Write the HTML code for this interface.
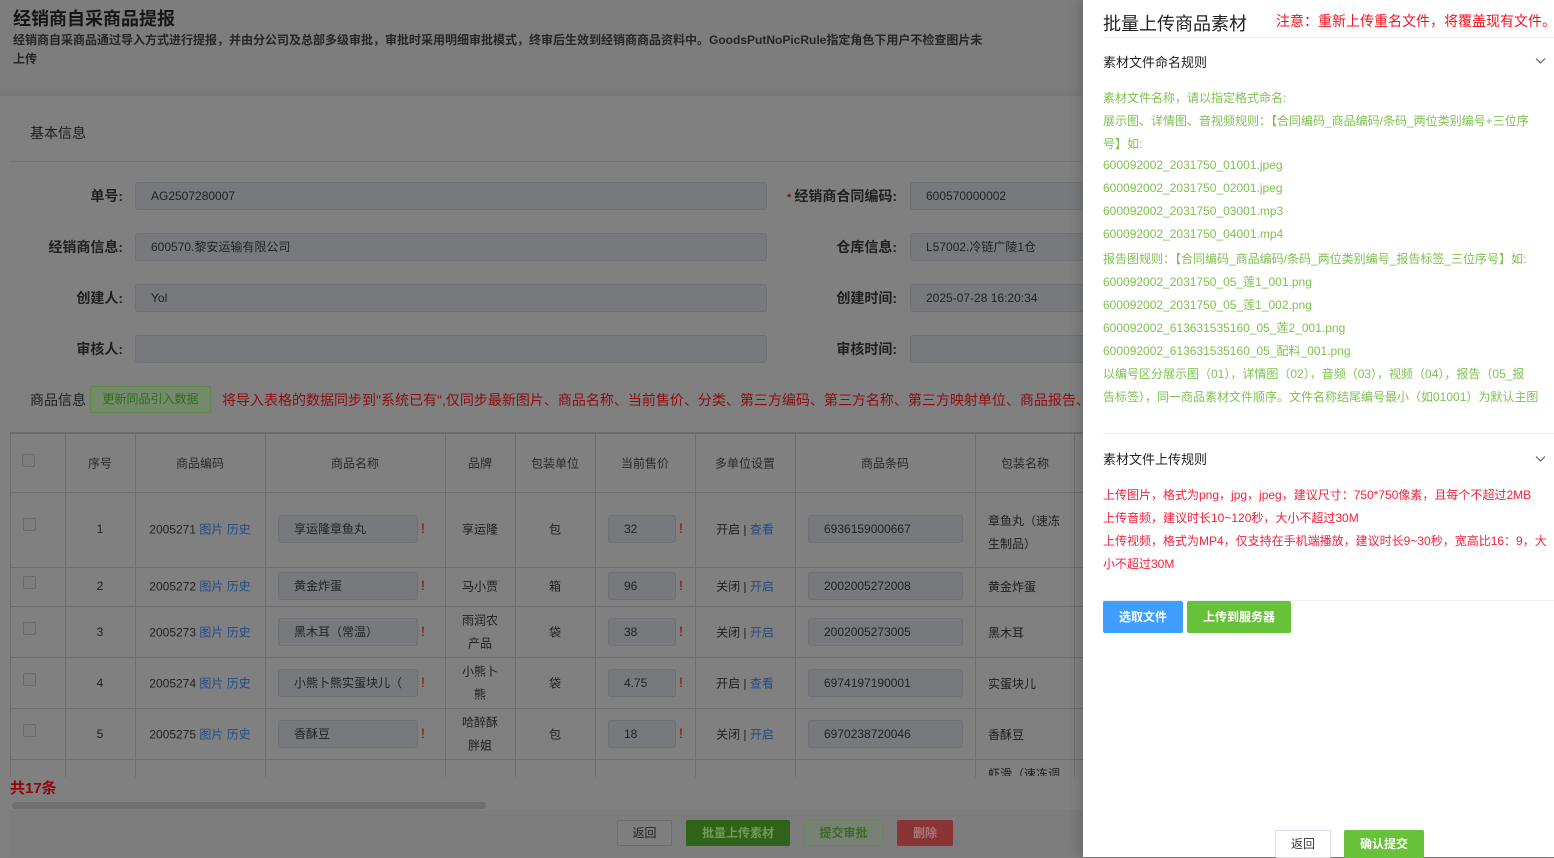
<!DOCTYPE html>
<html><head><meta charset="utf-8">
<style>
*{margin:0;padding:0;box-sizing:border-box}
body{width:1554px;height:857px;overflow:hidden;background:#808080;font-family:"Liberation Sans","Noto Sans CJK SC",sans-serif;position:relative;color:#1c1c1c}
.a{position:absolute;white-space:nowrap}
.hdr{left:0;top:0;width:1083px;height:94px;background:#7d7d7d}
.band{left:0;top:88px;width:1083px;height:8px;background:linear-gradient(#7b7b7b,#787878)}
.lab{font-size:14px;font-weight:bold;color:#202020;text-align:right}
.inp{height:28px;background:#77797c;border:1px solid #6f7174;border-radius:3px;font-size:12px;color:#222;padding-left:15px;line-height:26px}
.tbl{left:10px;top:432px;width:1073px;height:345px;border-top:2px solid #6c6c6c;overflow:hidden}
.vl{position:absolute;top:0;width:1px;height:345px;background:#6e6e6e}
.hl{position:absolute;left:0;width:1073px;height:1px;background:#6e6e6e}
.c{position:absolute;font-size:12px;color:#1f1f1f;transform:translate(-50%,-50%);white-space:nowrap}
.th{color:#2a2a2a}
.lk{color:#1f4b8a}
.ti{position:absolute;height:28px;background:#77797c;border:1px solid #6f7174;border-radius:3px;font-size:12px;color:#222;padding-left:15px;line-height:26px;white-space:nowrap;overflow:hidden}
.ex{position:absolute;color:#8a0a0a;font-size:14px}
.cb{position:absolute;left:12px;width:13px;height:13px;border:1px solid #6a6a6a;border-radius:2px;background:#7e7e7e}
.drawer{left:1083px;top:0;width:471px;height:857px;background:#fff;box-shadow:-4px 0 10px rgba(0,0,0,.15)}
.g{font-size:12px;color:#7ec24f;position:absolute;left:20px;white-space:nowrap}
.r{font-size:12px;color:#f5223d;position:absolute;left:20px;white-space:nowrap}
.btn{position:absolute;font-size:12px;font-weight:bold;text-align:center;border-radius:2px}
</style></head><body>
<div class="a hdr"></div>
<div class="a band"></div>
<div class="a" style="left:13px;top:5px;font-size:18px;font-weight:bold;color:#161616">经销商自采商品提报</div>
<div class="a" style="left:13px;top:31px;font-size:12px;font-weight:bold;color:#262626">经销商自采商品通过导入方式进行提报，并由分公司及总部多级审批，审批时采用明细审批模式，终审后生效到经销商商品资料中。GoodsPutNoPicRule指定角色下用户不检查图片未</div>
<div class="a" style="left:13px;top:50px;font-size:12px;font-weight:bold;color:#262626">上传</div>

<div class="a" style="left:30px;top:123px;font-size:14px;color:#1e1e1e">基本信息</div>
<div class="a" style="left:10px;top:161px;width:1073px;height:1px;background:#747474"></div>

<div class="a lab" style="left:20px;width:103px;top:186px">单号:</div>
<div class="a inp" style="left:135px;top:182px;width:632px">AG2507280007</div>
<div class="a lab" style="left:780px;width:117px;top:186px"><span style="color:#8a0a0a;font-size:11px">* </span>经销商合同编码:</div>
<div class="a inp" style="left:910px;top:182px;width:180px">600570000002</div>

<div class="a lab" style="left:20px;width:103px;top:237px">经销商信息:</div>
<div class="a inp" style="left:135px;top:233px;width:632px">600570.黎安运输有限公司</div>
<div class="a lab" style="left:780px;width:117px;top:237px">仓库信息:</div>
<div class="a inp" style="left:910px;top:233px;width:180px">L57002.冷链广陵1仓</div>

<div class="a lab" style="left:20px;width:103px;top:288px">创建人:</div>
<div class="a inp" style="left:135px;top:284px;width:632px">Yol</div>
<div class="a lab" style="left:780px;width:117px;top:288px">创建时间:</div>
<div class="a inp" style="left:910px;top:284px;width:180px">2025-07-28 16:20:34</div>

<div class="a lab" style="left:20px;width:103px;top:339px">审核人:</div>
<div class="a inp" style="left:135px;top:335px;width:632px"></div>
<div class="a lab" style="left:780px;width:117px;top:339px">审核时间:</div>
<div class="a inp" style="left:910px;top:335px;width:180px"></div>

<div class="a" style="left:30px;top:390px;font-size:14px;color:#1e1e1e">商品信息</div>
<div class="a" style="left:90px;top:386px;width:121px;height:27px;border:1px solid #5f8a4c;background:#748a6a;border-radius:2px;font-size:12px;color:#2f6e1a;text-align:center;line-height:25px">更新同品引入数据</div>
<div class="a" style="left:222px;top:390px;font-size:14px;color:#8e0c12">将导入表格的数据同步到"系统已有",仅同步最新图片、商品名称、当前售价、分类、第三方编码、第三方名称、第三方映射单位、商品报告、</div>

<div class="a tbl">
 <div class="vl" style="left:0"></div><div class="vl" style="left:55px"></div><div class="vl" style="left:125px"></div><div class="vl" style="left:255px"></div><div class="vl" style="left:435px"></div><div class="vl" style="left:505px"></div><div class="vl" style="left:585px"></div><div class="vl" style="left:685px"></div><div class="vl" style="left:785px"></div><div class="vl" style="left:965px"></div><div class="vl" style="left:1064px"></div>
 <div class="hl" style="top:58px"></div><div class="hl" style="top:133px"></div><div class="hl" style="top:172px"></div><div class="hl" style="top:223px"></div><div class="hl" style="top:274px"></div><div class="hl" style="top:325px"></div>
 <div class="cb" style="top:20px"></div>
 <div class="c th" style="left:90px;top:29px">序号</div><div class="c th" style="left:190px;top:29px">商品编码</div><div class="c th" style="left:345px;top:29px">商品名称</div><div class="c th" style="left:470px;top:29px">品牌</div><div class="c th" style="left:545px;top:29px">包装单位</div><div class="c th" style="left:635px;top:29px">当前售价</div><div class="c th" style="left:735px;top:29px">多单位设置</div><div class="c th" style="left:875px;top:29px">商品条码</div><div class="c th" style="left:1015px;top:29px">包装名称</div>
</div>
<div class="a" style="left:0;top:0;width:0;height:0" id="rows"></div>

<!-- rows: centers 528,585,631,682,733 -->
<div class="cb a" style="top:518px;left:23px"></div>
<div class="cb a" style="top:576px;left:23px"></div>
<div class="cb a" style="top:622px;left:23px"></div>
<div class="cb a" style="top:673px;left:23px"></div>
<div class="cb a" style="top:724px;left:23px"></div>

<div class="c" style="left:100px;top:529px">1</div>
<div class="c" style="left:100px;top:586px">2</div>
<div class="c" style="left:100px;top:632px">3</div>
<div class="c" style="left:100px;top:683px">4</div>
<div class="c" style="left:100px;top:734px">5</div>

<div class="c" style="left:200px;top:529px">2005271 <span class="lk">图片 历史</span></div>
<div class="c" style="left:200px;top:586px">2005272 <span class="lk">图片 历史</span></div>
<div class="c" style="left:200px;top:632px">2005273 <span class="lk">图片 历史</span></div>
<div class="c" style="left:200px;top:683px">2005274 <span class="lk">图片 历史</span></div>
<div class="c" style="left:200px;top:734px">2005275 <span class="lk">图片 历史</span></div>

<div class="ti" style="left:278px;top:515px;width:140px">享运隆章鱼丸</div><div class="ex" style="left:421px;top:520px">!</div>
<div class="ti" style="left:278px;top:572px;width:140px">黄金炸蛋</div><div class="ex" style="left:421px;top:577px">!</div>
<div class="ti" style="left:278px;top:618px;width:140px">黑木耳（常温）</div><div class="ex" style="left:421px;top:623px">!</div>
<div class="ti" style="left:278px;top:669px;width:140px">小熊卜熊实蛋块儿（</div><div class="ex" style="left:421px;top:674px">!</div>
<div class="ti" style="left:278px;top:720px;width:140px">香酥豆</div><div class="ex" style="left:421px;top:725px">!</div>

<div class="c" style="left:480px;top:529px">享运隆</div>
<div class="c" style="left:480px;top:586px">马小贾</div>
<div class="c" style="left:480px;top:620px">雨润农</div><div class="c" style="left:480px;top:643px">产品</div>
<div class="c" style="left:480px;top:671px">小熊卜</div><div class="c" style="left:480px;top:694px">熊</div>
<div class="c" style="left:480px;top:722px">哈醉酥</div><div class="c" style="left:480px;top:745px">胖姐</div>

<div class="c" style="left:555px;top:529px">包</div>
<div class="c" style="left:555px;top:586px">箱</div>
<div class="c" style="left:555px;top:632px">袋</div>
<div class="c" style="left:555px;top:683px">袋</div>
<div class="c" style="left:555px;top:734px">包</div>

<div class="ti" style="left:608px;top:515px;width:68px">32</div><div class="ex" style="left:679px;top:520px">!</div>
<div class="ti" style="left:608px;top:572px;width:68px">96</div><div class="ex" style="left:679px;top:577px">!</div>
<div class="ti" style="left:608px;top:618px;width:68px">38</div><div class="ex" style="left:679px;top:623px">!</div>
<div class="ti" style="left:608px;top:669px;width:68px">4.75</div><div class="ex" style="left:679px;top:674px">!</div>
<div class="ti" style="left:608px;top:720px;width:68px">18</div><div class="ex" style="left:679px;top:725px">!</div>

<div class="c" style="left:745px;top:529px">开启 | <span class="lk">查看</span></div>
<div class="c" style="left:745px;top:586px">关闭 | <span class="lk">开启</span></div>
<div class="c" style="left:745px;top:632px">关闭 | <span class="lk">开启</span></div>
<div class="c" style="left:745px;top:683px">开启 | <span class="lk">查看</span></div>
<div class="c" style="left:745px;top:734px">关闭 | <span class="lk">开启</span></div>

<div class="ti" style="left:808px;top:515px;width:155px">6936159000667</div>
<div class="ti" style="left:808px;top:572px;width:155px">2002005272008</div>
<div class="ti" style="left:808px;top:618px;width:155px">2002005273005</div>
<div class="ti" style="left:808px;top:669px;width:155px">6974197190001</div>
<div class="ti" style="left:808px;top:720px;width:155px">6970238720046</div>

<div class="a" style="left:988px;top:510px;font-size:12px;line-height:23px;color:#1f1f1f">章鱼丸（速冻<br>生制品）</div>
<div class="a" style="left:988px;top:578px;font-size:12px">黄金炸蛋</div>
<div class="a" style="left:988px;top:624px;font-size:12px">黑木耳</div>
<div class="a" style="left:988px;top:675px;font-size:12px">实蛋块儿</div>
<div class="a" style="left:988px;top:726px;font-size:12px">香酥豆</div>
<div class="a" style="left:988px;top:765px;font-size:12px;height:11px;overflow:hidden">虾滑（速冻调</div>

<div class="a" style="left:0;top:777px;width:1083px;height:80px;background:#808080"></div>
<div class="a" style="left:10px;top:777px;font-size:15px;font-weight:bold;color:#8e0808">共17条</div>
<div class="a" style="left:12px;top:802px;width:474px;height:7px;border-radius:4px;background:#6f6f70"></div>
<div class="a" style="left:10px;top:810px;width:1073px;height:47px;background:#7c7c7c"></div>
<div class="btn" style="left:617px;top:820px;width:55px;height:26px;border:1px solid #6d6d6d;background:#7e7e7e;color:#222;line-height:24px;font-weight:normal">返回</div>
<div class="btn" style="left:686px;top:820px;width:104px;height:26px;background:#2f6418;color:#6f9a5a;line-height:26px">批量上传素材</div>
<div class="btn" style="left:804px;top:820px;width:79px;height:26px;border:1px solid #6e8066;background:#788274;color:#3c6a24;line-height:24px">提交审批</div>
<div class="btn" style="left:897px;top:820px;width:56px;height:26px;background:#8a3436;color:#a97a7a;line-height:26px">删除</div>

<div class="a drawer">
 <div class="a" style="left:20px;top:10px;font-size:18px;color:#222">批量上传商品素材</div>
 <div class="a" style="left:193px;top:11px;font-size:14px;color:#f5121f">注意：重新上传重名文件，将覆盖现有文件。</div>
 <div class="a" style="left:20px;top:37px;width:451px;height:1px;background:#eceff3"></div>
 <div class="a" style="left:20px;top:52px;font-size:13px;color:#222">素材文件命名规则</div>
 <svg class="a" style="left:452px;top:57px" width="11" height="8"><path d="M1 1.5 L5.5 6 L10 1.5" fill="none" stroke="#555" stroke-width="1"/></svg>
 <div class="g" style="top:89px">素材文件名称，请以指定格式命名:</div>
 <div class="g" style="top:112px">展示图、详情图、音视频规则：【合同编码_商品编码/条码_两位类别编号+三位序</div>
 <div class="g" style="top:135px">号】如:</div>
 <div class="g" style="top:158px">600092002_2031750_01001.jpeg</div>
 <div class="g" style="top:181px">600092002_2031750_02001.jpeg</div>
 <div class="g" style="top:204px">600092002_2031750_03001.mp3</div>
 <div class="g" style="top:227px">600092002_2031750_04001.mp4</div>
 <div class="g" style="top:250px">报告图规则：【合同编码_商品编码/条码_两位类别编号_报告标签_三位序号】如:</div>
 <div class="g" style="top:273px">600092002_2031750_05_莲1_001.png</div>
 <div class="g" style="top:296px">600092002_2031750_05_莲1_002.png</div>
 <div class="g" style="top:319px">600092002_613631535160_05_莲2_001.png</div>
 <div class="g" style="top:342px">600092002_613631535160_05_配料_001.png</div>
 <div class="g" style="top:365px">以编号区分展示图（01），详情图（02），音频（03），视频（04），报告（05_报</div>
 <div class="g" style="top:388px">告标签），同一商品素材文件顺序。文件名称结尾编号最小（如01001）为默认主图</div>
 <div class="a" style="left:20px;top:433px;width:451px;height:1px;background:#eceff3"></div>
 <div class="a" style="left:20px;top:449px;font-size:13px;color:#222">素材文件上传规则</div>
 <svg class="a" style="left:452px;top:455px" width="11" height="8"><path d="M1 1.5 L5.5 6 L10 1.5" fill="none" stroke="#555" stroke-width="1"/></svg>
 <div class="r" style="top:486px">上传图片，格式为png，jpg，jpeg，建议尺寸：750*750像素，且每个不超过2MB</div>
 <div class="r" style="top:509px">上传音频，建议时长10~120秒，大小不超过30M</div>
 <div class="r" style="top:532px">上传视频，格式为MP4，仅支持在手机端播放，建议时长9~30秒，宽高比16：9，大</div>
 <div class="r" style="top:555px">小不超过30M</div>
 <div class="a" style="left:20px;top:600px;width:451px;height:1px;background:#eceff3"></div>
 <div class="btn" style="left:20px;top:601px;width:80px;height:32px;background:#409eff;color:#fff;line-height:32px">选取文件</div>
 <div class="btn" style="left:104px;top:601px;width:104px;height:32px;background:#67c23a;color:#fff;line-height:32px">上传到服务器</div>
 <div class="btn" style="left:192px;top:830px;width:56px;height:28px;border:1px solid #dcdfe6;background:#fff;color:#333;line-height:26px;font-weight:normal">返回</div>
 <div class="btn" style="left:261px;top:830px;width:80px;height:28px;background:#67c23a;color:#fff;line-height:28px">确认提交</div>
</div>
</body></html>
